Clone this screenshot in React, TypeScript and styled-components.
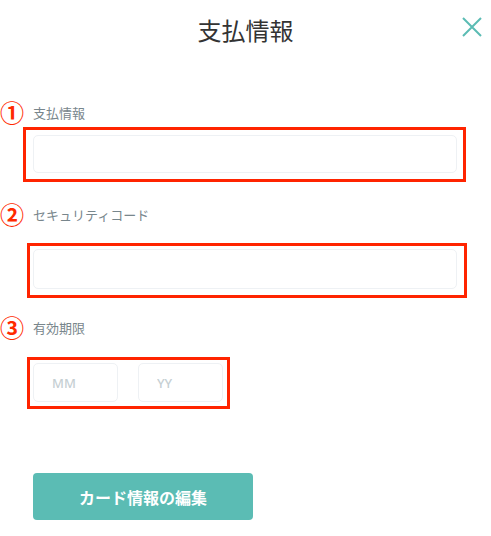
import React from 'react'
import styled, { createGlobalStyle } from 'styled-components'

const GlobalStyle = createGlobalStyle`
  html, body {
    margin: 0;
    padding: 0;
    background: #fff;
  }
  body {
    font-family: "Noto Sans CJK JP", "Noto Sans", sans-serif;
  }
`

const UI = {
  Page: styled.div`
    width: 491px;
    min-height: 536px;
    background: #fff;
  `,
  Header: styled.header`
    display: grid;
    grid-template-columns: 1fr auto 1fr;
    align-items: center;
    height: 60px;
  `,
  Title: styled.h1`
    grid-column: 2;
    margin: 0;
    font-size: 24px;
    line-height: 34px;
    font-weight: 400;
    color: #333;
  `,
  Close: styled.button`
    grid-column: 3;
    justify-self: end;
    display: flex;
    padding: 0;
    margin: -6px 9px 0 0;
    border: 0;
    background: none;
    cursor: pointer;
  `,
  Form: styled.form`
    display: flex;
    flex-direction: column;
    padding: 44px 34px 0 33px;
  `,
  Field: styled.div<{ $gap: number; $after: number }>`
    display: flex;
    flex-direction: column;
    gap: ${({ $gap }) => $gap}px;
    margin-bottom: ${({ $after }) => $after}px;
  `,
  Label: styled.label`
    position: relative;
    font-size: 13px;
    line-height: 18px;
    color: #78868c;
  `,
  Number: styled.span`
    position: absolute;
    left: -33px;
    top: -4px;
    font-size: 24px;
    line-height: 24px;
    font-weight: 700;
    color: #ff2a00;
  `,
  Marked: styled.div<{ $box: [number, number, number, number]; $w?: number }>`
    position: relative;
    width: ${({ $w }) => ($w ? `${$w}px` : 'auto')};
    &::after {
      content: '';
      position: absolute;
      top: ${({ $box }) => -$box[0]}px;
      right: ${({ $box }) => -$box[1]}px;
      bottom: ${({ $box }) => -$box[2]}px;
      left: ${({ $box }) => -$box[3]}px;
      border: 3px solid #ff2400;
      pointer-events: none;
    }
  `,
  Input: styled.input<{ $h: number }>`
    display: block;
    width: 100%;
    height: ${({ $h }) => $h}px;
    box-sizing: border-box;
    border: 1.5px solid #eef1f4;
    border-radius: 5px;
    padding: 0 18px;
    font-family: "Noto Sans", "Noto Sans CJK JP", sans-serif;
    font-size: 13px;
    font-weight: 500;
    color: #333;
    outline: none;
    &::placeholder {
      color: #c6cfd3;
    }
  `,
  DateRow: styled.div`
    display: grid;
    grid-template-columns: 85px 85px;
    column-gap: 20px;
  `,
  Submit: styled.button`
    width: 220px;
    height: 47px;
    margin-top: 71px;
    border: 0;
    border-radius: 4px;
    background: #5bbcb4;
    color: #fff;
    font-family: "Noto Sans CJK JP", sans-serif;
    font-size: 16px;
    font-weight: 700;
    cursor: pointer;
  `
}

const CloseIcon = () => (
  <svg width="20" height="20" viewBox="0 0 20 20" fill="none">
    <path d="M1 1 L19 19 M19 1 L1 19" stroke="#5bbcb4" strokeWidth="2" />
  </svg>
)

export default function App () {
  return (
    <UI.Page>
      <GlobalStyle />
      <UI.Header>
        <UI.Title>支払情報</UI.Title>
        <UI.Close type="button" aria-label="閉じる">
          <CloseIcon />
        </UI.Close>
      </UI.Header>
      <UI.Form onSubmit={e => e.preventDefault()}>
        <UI.Field $gap={13} $after={33}>
          <UI.Label>
            <UI.Number>①</UI.Number>
            支払情報
          </UI.Label>
          <UI.Marked $box={[8, 9, 9, 10]}>
            <UI.Input $h={38} />
          </UI.Marked>
        </UI.Field>
        <UI.Field $gap={25} $after={30}>
          <UI.Label>
            <UI.Number>②</UI.Number>
            セキュリティコード
          </UI.Label>
          <UI.Marked $box={[6, 10, 9, 6]}>
            <UI.Input $h={40} />
          </UI.Marked>
        </UI.Field>
        <UI.Field $gap={26} $after={0}>
          <UI.Label>
            <UI.Number>③</UI.Number>
            有効期限
          </UI.Label>
          <UI.Marked $box={[6, 7, 7, 6]} $w={190}>
            <UI.DateRow>
              <UI.Input $h={39} placeholder="MM" />
              <UI.Input $h={39} placeholder="YY" />
            </UI.DateRow>
          </UI.Marked>
        </UI.Field>
        <UI.Submit type="submit">カード情報の編集</UI.Submit>
      </UI.Form>
    </UI.Page>
  )
}
